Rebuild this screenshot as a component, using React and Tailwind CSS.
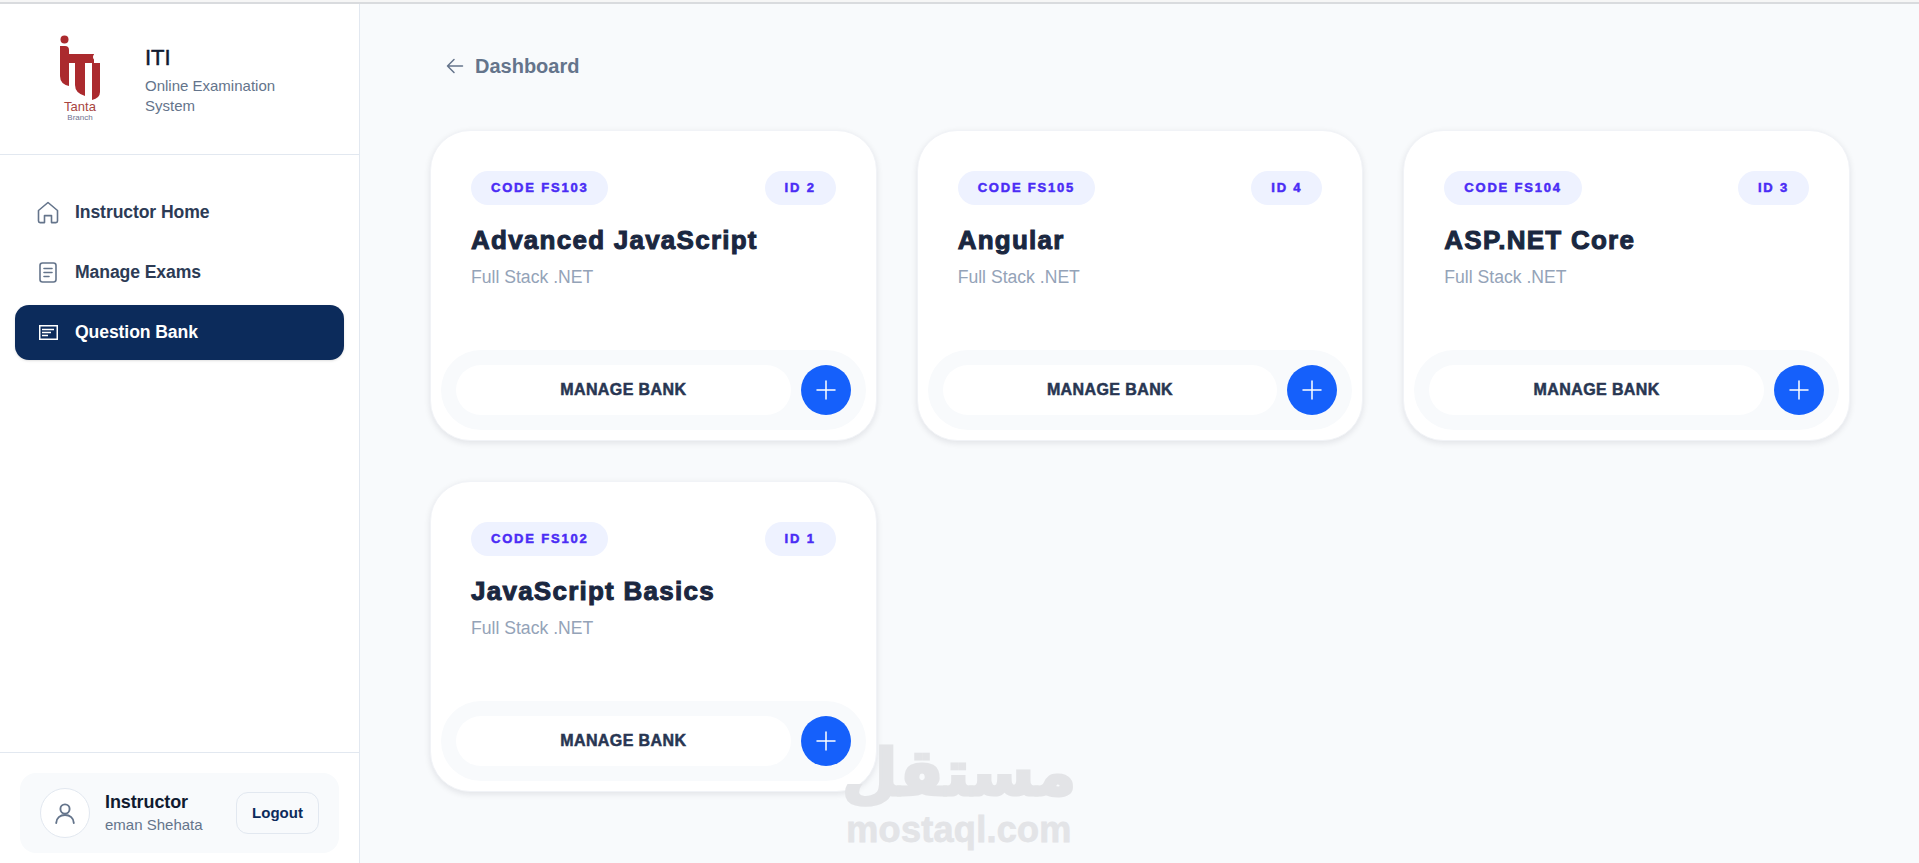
import React from "react";

const sans = "font-['Liberation_Sans',Arial,sans-serif]";

function Logo() {
  return (
    <div className="w-[64px] flex flex-col items-center shrink-0">
      <svg width="40" height="66" viewBox="0 0 40 66" className="block">
        <circle cx="4.500" cy="4.500" r="4" fill="#ab2a2e" />
        <path d="M0 11H5Q9 11 9 15V19H34V28H25V61Q15 58 15 50V28H9V51Q0 49 0 41Z" fill="#ab2a2e" />
        <path d="M32 28H40V57Q40 63 32 65Z" fill="#ab2a2e" />
        <circle cx="36" cy="22" r="3" fill="#fff" />
      </svg>
      <div className="text-[13px] leading-[12px] text-[#a8453f]">Tanta</div>
      <div className="text-[8px] leading-[10px] text-[#6f7390]">Branch</div>
    </div>
  );
}

const HomeIcon = () => (
  <svg width="22" height="23" viewBox="0 0 22 23" fill="none" stroke="#64748b" strokeWidth="1.6" strokeLinejoin="round" strokeLinecap="round">
    <path d="M1.500 9.500 11 1.500l9.500 8v10.500a1.600 1.600 0 0 1-1.600 1.600H14.500v-7h-7v7H3.100a1.600 1.600 0 0 1-1.600-1.600z" />
  </svg>
);
const DocIcon = () => (
  <svg width="18" height="21" viewBox="0 0 18 21" fill="none" stroke="#64748b" strokeWidth="1.6" strokeLinecap="round">
    <rect x="1" y="1" width="16" height="19" rx="2.500" />
    <path d="M5 6.500h8M5 10.500h8M5 14.500h5" />
  </svg>
);
const BankIcon = () => (
  <svg width="19" height="15" viewBox="0 0 19 15" fill="none" stroke="#fff">
    <rect x="0.750" y="0.750" width="17.500" height="13.500" strokeWidth="1.500" />
    <path d="M3 4.500h12M3 7.500h9M3 10.500h6" strokeWidth="1.500" />
  </svg>
);

function NavItem({ icon, label, active }) {
  return (
    <div className={`h-[55px] rounded-[14px] flex items-center pl-[21px] ${active ? "bg-[#0c2b5b] text-white shadow-sm" : "text-[#2c3b55]"}`}>
      <div className="w-[24px] flex justify-center shrink-0">{icon}</div>
      <span className="ml-[15px] text-[17.6px] font-bold tracking-[-0.1px]">{label}</span>
    </div>
  );
}

function Pill({ children }) {
  return (
    <span className="h-[34px] px-[20px] rounded-full bg-[#eef2ff] text-[#4a2cf5] text-[13px] font-black tracking-[1.800px] flex items-center [-webkit-text-stroke:0.500px_#4a2cf5]">
      {children}
    </span>
  );
}

function Card({ code, id, title }) {
  return (
    <div className="h-[311px] rounded-[40px] bg-white border border-[#f1f3f7] shadow-[0_2px_6px_rgba(15,23,42,0.10)] flex flex-col px-[10px] pb-[10px]">
      <div className="px-[30px] pt-[40px] flex-1">
        <div className="flex justify-between items-center">
          <Pill>CODE {code}</Pill>
          <Pill>ID {id}</Pill>
        </div>
        <h2 className="mt-[20px] text-[26px] leading-[31px] font-black text-[#1a2740] tracking-[1.250px] [-webkit-text-stroke:1px_#1a2740]">{title}</h2>
        <p className="mt-[9px] text-[17.6px] leading-[24px] text-[#94a3b8]">Full Stack .NET</p>
      </div>
      <div className="h-[80px] rounded-full bg-[#f8fafc] flex items-center pl-[15px] pr-[15px] gap-[10px]">
        <div className="flex-1 h-[50px] rounded-full bg-white flex items-center justify-center text-[16px] font-black tracking-[0.400px] text-[#283652] [-webkit-text-stroke:0.500px_#283652]">
          MANAGE BANK
        </div>
        <div className="w-[50px] h-[50px] rounded-full bg-[#1560fb] flex items-center justify-center shrink-0">
          <svg width="20" height="20" viewBox="0 0 20 20" stroke="#fff" strokeWidth="1.500" strokeLinecap="round">
            <path d="M10 1v18M1 10h18" />
          </svg>
        </div>
      </div>
    </div>
  );
}

export default function App() {
  return (
    <div className={`${sans} relative w-full h-[863px] overflow-hidden bg-white flex flex-col`}>
      <div className="h-[4px] bg-[#f6f6f6] border-b-2 border-[#d9dbde] shrink-0" />
      <div className="flex-1 flex min-h-0">
        <aside className="w-[360px] shrink-0 bg-white border-r border-[#e2e8f0] flex flex-col">
          <div className="h-[151px] border-b border-[#e2e8f0] flex items-center pl-[48px] shrink-0">
            <Logo />
            <div className="ml-[33px] w-[170px] pt-[3px]">
              <div className="text-[22px] leading-[26px] text-[#0f1a30] font-normal [-webkit-text-stroke:0.500px_#0f1a30]">ITI</div>
              <div className="mt-[5px] text-[15px] leading-[20px] text-[#64748b]">Online Examination System</div>
            </div>
          </div>
          <nav className="px-[15px] pt-[30px] flex-1 flex flex-col gap-[5px]">
            <NavItem icon={<HomeIcon />} label="Instructor Home" />
            <NavItem icon={<DocIcon />} label="Manage Exams" />
            <NavItem icon={<BankIcon />} label="Question Bank" active />
          </nav>
          <div className="h-[111px] border-t border-[#e2e8f0] pt-[20px] px-[20px] shrink-0">
            <div className="h-[80px] rounded-[16px] bg-[#f8fafc] flex items-center pl-[20px] pr-[20px]">
              <div className="w-[50px] h-[50px] rounded-full bg-white border border-[#e2e8f0] flex items-center justify-center shrink-0">
                <svg width="20" height="21" viewBox="0 0 20 21" fill="none" stroke="#64748b" strokeWidth="1.900" strokeLinecap="round">
                  <circle cx="10" cy="6" r="4.600" />
                  <path d="M1.200 20c0-5 4-8 8.800-8s8.800 3 8.800 8" />
                </svg>
              </div>
              <div className="ml-[15px] flex-1 min-w-0">
                <div className="text-[18px] leading-[22px] font-bold text-[#101a30] tracking-[-0.100px]">Instructor</div>
                <div className="mt-[2px] text-[15px] leading-[20px] text-[#64748b]">eman Shehata</div>
              </div>
              <div className="w-[83px] h-[42px] rounded-[12px] border border-[#e2e8f0] flex items-center justify-center text-[15px] font-bold text-[#0c2b5b] shrink-0">
                Logout
              </div>
            </div>
          </div>
        </aside>
        <main className="flex-1 min-w-0 bg-[#f8fafc] pl-[70px] pr-[69px]">
          <div className="h-[126px] flex items-start pt-[50px]">
            <div className="flex items-center text-[#64748b] pl-[16px]">
              <svg width="18" height="18" viewBox="0 0 18 18" fill="none" stroke="#64748b" strokeWidth="1.500" strokeLinecap="round" strokeLinejoin="round">
                <path d="M16.500 9H1.500M8 2.500 1.500 9 8 15.500" />
              </svg>
              <span className="ml-[11px] text-[20px] leading-[24px] font-bold">Dashboard</span>
            </div>
          </div>
          <div className="grid grid-cols-3 gap-[40px]">
            <Card code="FS103" id="2" title="Advanced JavaScript" />
            <Card code="FS105" id="4" title="Angular" />
            <Card code="FS104" id="3" title="ASP.NET Core" />
            <Card code="FS102" id="1" title="JavaScript Basics" />
          </div>
        </main>
      </div>
      <div className="absolute left-[846px] top-[738px] w-[226px] flex flex-col items-center pointer-events-none text-[#e3e4e7] font-bold">
        <div className="h-[70px] flex items-center font-['DejaVu_Sans',sans-serif] text-[64px] leading-[70px] [-webkit-text-stroke:3px_#e3e4e7]" dir="rtl">مستقل</div>
        <div className="text-[36px] leading-[40px] tracking-[0.300px] mt-[2px] [-webkit-text-stroke:0.800px_#e3e4e7]">mostaql.com</div>
      </div>
    </div>
  );
}
